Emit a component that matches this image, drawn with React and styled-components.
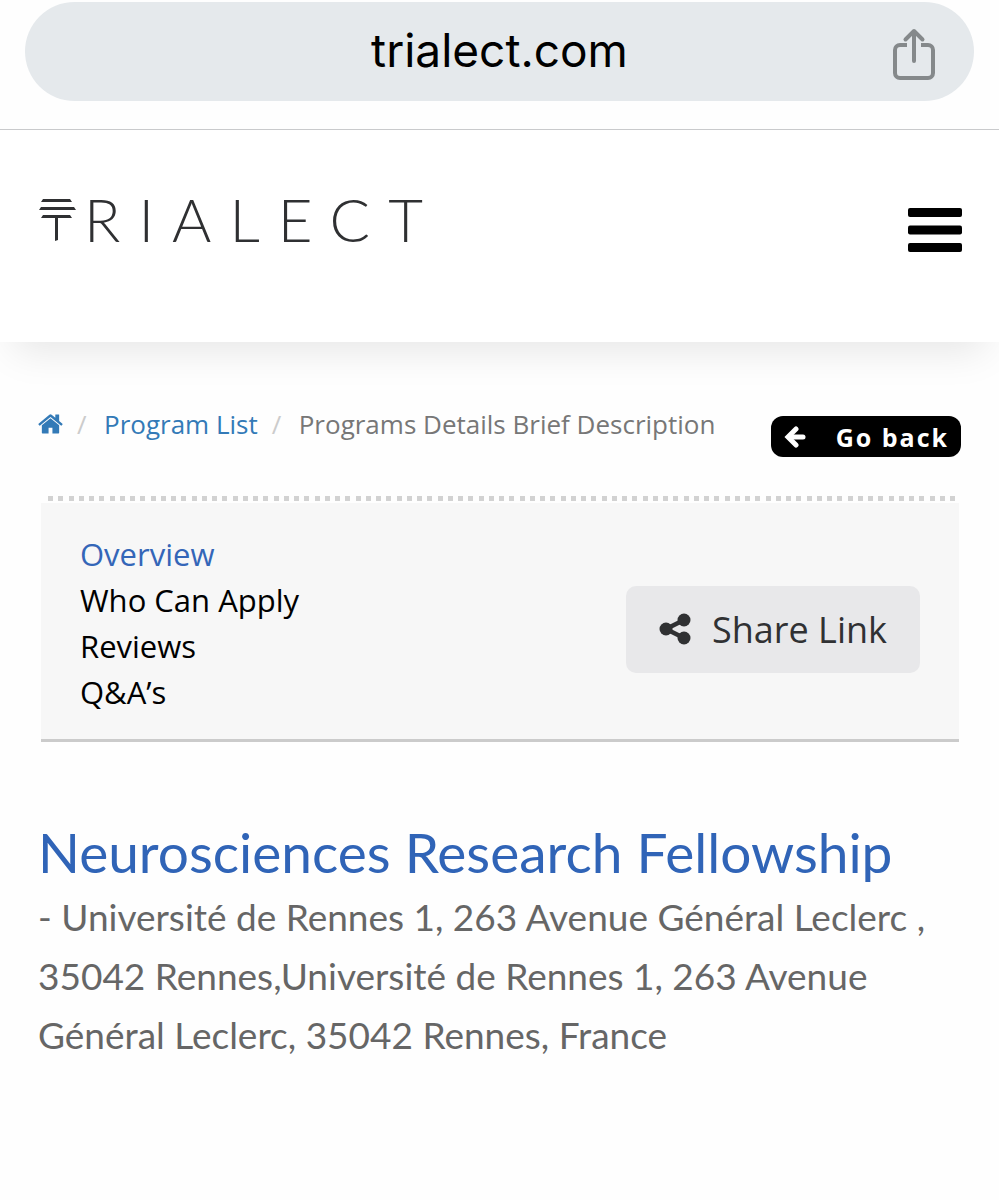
import React from "react";
import styled, { createGlobalStyle } from "styled-components";

const GlobalStyle = createGlobalStyle`
  *, *::before, *::after { box-sizing: border-box; }
  body {
    margin: 0;
    background: #fefefe;
    color: #000;
    font-family: "Open Sans", "Noto Sans", sans-serif;
  }
  a { color: inherit; text-decoration: none; }
  button { border: 0; margin: 0; font: inherit; cursor: pointer; }
`;

const BrowserBar = styled.div`
  padding: 2px 25px 28px;
  border-bottom: 1px solid #c9cacc;
`;

const AddressPill = styled.div`
  display: grid;
  grid-template-columns: 46px 1fr 46px;
  align-items: center;
  height: 99px;
  padding: 0 35px;
  border-radius: 50px;
  background: #e5e9ec;
`;

const Address = styled.span`
  grid-column: 2;
  padding-bottom: 4px;
  text-align: center;
  font-family: Inter, "Liberation Sans", sans-serif;
  font-size: 46px;
  line-height: 60px;
`;

const IconButton = styled.button`
  display: flex;
  padding: 4px 0 0;
  background: none;
  color: ${(p) => p.$color};
`;

const SiteHeader = styled.header`
  display: flex;
  justify-content: space-between;
  height: 212px;
  padding: 64px 37px 0 39px;
  background: #fff;
  box-shadow: 0 22px 38px -14px rgba(0, 0, 0, 0.1);
`;

const Logo = styled.a`
  display: flex;
  align-items: flex-start;
  height: 50px;
  gap: 7px;
  color: #2f3032;
`;

const LogoMark = styled.svg`
  margin-top: 4px;
`;

const Wordmark = styled.span`
  font-family: Lato, sans-serif;
  font-size: 60px;
  font-weight: 300;
  line-height: 50px;
  letter-spacing: 18px;
`;

const MenuSlot = styled.div`
  padding-top: 10px;
`;

const Page = styled.main`
  padding: 64px 38px 120px;
`;

const CrumbRow = styled.div`
  display: flex;
  justify-content: space-between;
  align-items: flex-start;
  padding-bottom: 39px;
`;

const Crumbs = styled.ol`
  display: flex;
  align-items: center;
  margin: 0;
  padding: 0;
  list-style: none;
  font-size: 26px;
  line-height: 36px;
  color: #777;
`;

const Crumb = styled.li`
  display: flex;
  align-items: center;

  & + &::before {
    content: "/";
    width: 41px;
    padding-left: 14px;
    color: #ccc;
  }

  a { display: flex; color: #337ab7; }
`;

const BackButton = styled.button`
  display: flex;
  align-items: center;
  justify-content: space-between;
  width: 190px;
  height: 41px;
  margin-top: 10px;
  padding: 0 12px 0 13px;
  border-radius: 12px;
  background: #000;
  color: #fff;

  && {
    font-size: 25px;
    font-weight: 700;
    letter-spacing: 2px;
  }
`;

const DottedRule = styled.div`
  height: 5px;
  margin: 0 2px 2px 10px;
  background: repeating-linear-gradient(
    90deg,
    #d2d2d2 0 5px, transparent 5px 10px,
    #d2d2d2 10px 15px, transparent 15px 21px,
    #d2d2d2 21px 26px, transparent 26px 31px,
    #d2d2d2 31px 36px, transparent 36px 41px
  );
`;

const Panel = styled.section`
  display: flex;
  justify-content: space-between;
  align-items: center;
  margin: 0 2px 0 3px;
  padding: 28px 39px 24px;
  border-bottom: 3px solid #cbcbcb;
  background: #f7f7f7;
`;

const TabList = styled.nav`
  display: flex;
  flex-direction: column;
  font-size: 31px;
  line-height: 46px;
`;

const Tab = styled.a`
  color: ${(p) => (p.$active ? "#3466b8" : "#000")};
`;

const ShareButton = styled.button`
  display: flex;
  align-items: center;
  gap: 21px;
  height: 87px;
  padding: 0 33px;
  border-radius: 10px;
  background: #e8e8ea;
  color: #303133;

  && {
    margin-top: 12px;
    font-size: 36px;
  }
`;

const Title = styled.h1`
  margin: 75px 0 0;
  color: #3064b7;
  font-family: Lato, sans-serif;
  font-size: 55px;
  font-weight: 400;
  line-height: 70px;
`;

const Location = styled.p`
  margin: 0;
  color: #666;
  font-family: Lato, sans-serif;
  font-size: 37px;
  line-height: 59px;
`;

const ShareUpIcon = () => (
  <svg width="42" height="52" viewBox="0 0 42 52" fill="none" stroke="currentColor" strokeWidth="4" strokeLinecap="round" strokeLinejoin="round" aria-hidden="true">
    <path d="M14 17H7a5 5 0 0 0-5 5v23a5 5 0 0 0 5 5h28a5 5 0 0 0 5-5V22a5 5 0 0 0-5-5h-7" strokeLinecap="butt" />
    <path d="M21 33V3M12.500 11.500 21 3l8.500 8.500" />
  </svg>
);

const MenuIcon = () => (
  <svg width="54" height="44" viewBox="0 0 54 44" fill="currentColor" aria-hidden="true">
    <rect width="54" height="9" rx="2" />
    <rect y="17.500" width="54" height="9" rx="2" />
    <rect y="35" width="54" height="9" rx="2" />
  </svg>
);

const HomeIcon = () => (
  <svg width="25" height="20" viewBox="0 256 1664 1280" fill="currentColor" aria-hidden="true">
    <path d="M1408 992v480q0 26-19 45t-45 19h-384v-384h-256v384h-384q-26 0-45-19t-19-45v-480q0-1 .5-3t.5-3l575-474 575 474q1 2 1 6zm223-69l-62 74q-8 9-21 11h-3q-13 0-21-7l-692-577-692 577q-12 8-24 7-13-2-21-11l-62-74q-8-10-7-23.500t11-21.500l719-599q32-26 76-26t76 26l244 204v-195q0-14 9-23t23-9h192q14 0 23 9t9 23v408l219 182q10 8 11 21.500t-7 23.500z" />
  </svg>
);

const ArrowIcon = () => (
  <svg width="22" height="22" viewBox="0 0 22 22" fill="none" stroke="currentColor" strokeWidth="5" strokeLinecap="round" aria-hidden="true">
    <path d="M12 3 4 11l8 8" />
    <path d="M5 11h14" />
  </svg>
);

const ShareNodesIcon = () => (
  <svg width="32" height="32" viewBox="0 0 32 32" fill="currentColor" aria-hidden="true">
    <circle cx="7" cy="16" r="6.500" />
    <circle cx="25" cy="7" r="6.500" />
    <circle cx="25" cy="25" r="6.500" />
    <path d="M25 7 7 16l18 9" fill="none" stroke="currentColor" strokeWidth="4.500" />
  </svg>
);

const tabs = ["Overview", "Who Can Apply", "Reviews", "Q&A’s"];

export default function App() {
  return (
    <>
      <GlobalStyle />
      <BrowserBar>
        <AddressPill>
          <Address>trialect.com</Address>
          <IconButton $color="#85898b" aria-label="Share page">
            <ShareUpIcon />
          </IconButton>
        </AddressPill>
      </BrowserBar>
      <SiteHeader>
        <Logo href="#" aria-label="Trialect">
          <LogoMark width="38" height="44" viewBox="0 0 38 44" fill="currentColor" aria-hidden="true">
            <path d="M4 1h27l2 3H2zM2 9h33l2 3H0zM4 17h27l2 3H2z" />
            <path d="M16 19h3v23l-3 1z" />
          </LogoMark>
          <Wordmark>RIALECT</Wordmark>
        </Logo>
        <MenuSlot>
          <IconButton $color="#000" aria-label="Open menu">
            <MenuIcon />
          </IconButton>
        </MenuSlot>
      </SiteHeader>
      <Page>
        <CrumbRow>
          <Crumbs>
            <Crumb>
              <a href="#" aria-label="Home"><HomeIcon /></a>
            </Crumb>
            <Crumb><a href="#">Program List</a></Crumb>
            <Crumb>Programs Details Brief Description</Crumb>
          </Crumbs>
          <BackButton>
            <ArrowIcon />
            Go back
          </BackButton>
        </CrumbRow>
        <DottedRule />
        <Panel>
          <TabList>
            {tabs.map((label, i) => (
              <Tab key={label} href="#" $active={i === 0}>{label}</Tab>
            ))}
          </TabList>
          <ShareButton>
            <ShareNodesIcon />
            Share Link
          </ShareButton>
        </Panel>
        <Title>Neurosciences Research Fellowship</Title>
        <Location>
          - Université de Rennes 1, 263 Avenue Général Leclerc , 35042 Rennes,Université de Rennes 1, 263 Avenue Général Leclerc, 35042 Rennes, France
        </Location>
      </Page>
    </>
  );
}
